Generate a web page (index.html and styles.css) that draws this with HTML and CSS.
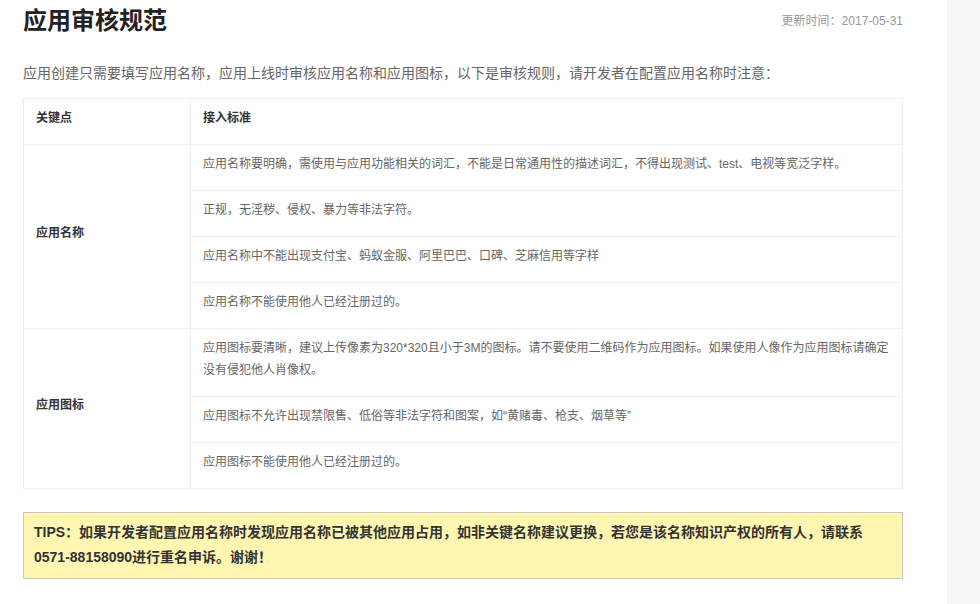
FILE: index.html
```html
<!DOCTYPE html>
<html lang="zh-CN">
<head>
<meta charset="utf-8">
<title>应用审核规范</title>
<link rel="stylesheet" href="styles.css">
</head>
<body>
<div class="page">
  <main class="main">
    <header class="header">
      <h1 class="title">应用审核规范</h1>
      <span class="date">更新时间：2017-05-31</span>
    </header>
    <p class="intro">应用创建只需要填写应用名称，应用上线时审核应用名称和应用图标，以下是审核规则，请开发者在配置应用名称时注意：</p>
    <table class="rules">
      <thead>
        <tr><th class="key">关键点</th><th>接入标准</th></tr>
      </thead>
      <tbody>
        <tr><td class="key" rowspan="4">应用名称</td><td>应用名称要明确，需使用与应用功能相关的词汇，不能是日常通用性的描述词汇，不得出现测试、test、电视等宽泛字样。</td></tr>
        <tr><td>正规，无淫秽、侵权、暴力等非法字符。</td></tr>
        <tr><td>应用名称中不能出现支付宝、蚂蚁金服、阿里巴巴、口碑、芝麻信用等字样</td></tr>
        <tr><td>应用名称不能使用他人已经注册过的。</td></tr>
        <tr><td class="key" rowspan="3">应用图标</td><td>应用图标要清晰，建议上传像素为320*320且小于3M的图标。请不要使用二维码作为应用图标。如果使用人像作为应用图标请确定<br>没有侵犯他人肖像权。</td></tr>
        <tr><td>应用图标不允许出现禁限售、低俗等非法字符和图案，如“黄赌毒、枪支、烟草等”</td></tr>
        <tr><td>应用图标不能使用他人已经注册过的。</td></tr>
      </tbody>
    </table>
    <div class="tips">TIPS：如果开发者配置应用名称时发现应用名称已被其他应用占用，如非关键名称建议更换，若您是该名称知识产权的所有人，请联系0571-88158090进行重名申诉。谢谢！</div>
  </main>
  <aside class="side"></aside>
</div>
</body>
</html>
```

FILE: styles.css
```css
html, body {
  margin: 0;
  padding: 0;
  background: #fff;
}
body {
  font-family: "Liberation Sans", "Noto Sans CJK SC", sans-serif;
  color: #333;
}
.page {
  display: flex;
  min-height: 604px;
}
.main {
  width: 947px;
  box-sizing: border-box;
  padding: 5px 44px 0 23px;
  background: #fff;
}
.side {
  flex: 1;
  background: #f6f6f6;
}
.header {
  display: flex;
  justify-content: space-between;
  align-items: center;
}
.title {
  margin: 0;
  font-size: 24px;
  line-height: 32px;
  font-weight: bold;
  color: #222;
}
.date {
  font-size: 12px;
  line-height: 16px;
  color: #999;
}
.intro {
  margin: 24px 0 13px;
  font-size: 14px;
  line-height: 24px;
  color: #666;
}
.rules {
  width: 880px;
  border-collapse: collapse;
  font-size: 12px;
}
.rules th,
.rules td {
  border: 1px solid #eceef1;
  padding: 8px 12px 15px;
  line-height: 22px;
  text-align: left;
  vertical-align: middle;
}
.rules th {
  font-weight: bold;
  color: #333;
}
.rules td {
  color: #666;
}
.rules .key {
  width: 142px;
  font-weight: bold;
  color: #333;
}
.tips {
  margin-top: 23px;
  background: #fff6b2;
  border: 1px solid #c6c6c6;
  padding: 7px 10px 8px;
  font-size: 14px;
  line-height: 25px;
  font-weight: bold;
  color: #333;
}
```
